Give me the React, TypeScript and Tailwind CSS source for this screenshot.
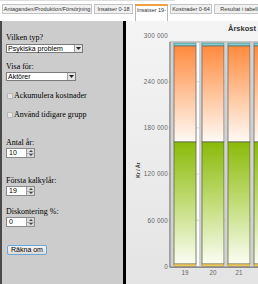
import React from 'react';

// Tab strip above the calculator
const tabs = [
  { label: 'Antaganden/Produktion/Försörjning', cls: 'w-[90px]', active: false },
  { label: 'Insatser 0-18', cls: 'w-[39px]', active: false },
  { label: 'Insatser 19-', cls: 'w-[33px]', active: true },
  { label: 'Kostnader 0-64', cls: 'w-[42px]', active: false },
  { label: 'Resultat i tabell', cls: 'w-[50px]', active: false },
];

const ticks = [
  { label: '300 000', y: 14.5 },
  { label: '240 000', y: 60.7 },
  { label: '180 000', y: 106.9 },
  { label: '120 000', y: 153.1 },
  { label: '60 000', y: 199.3 },
  { label: '0', y: 245.5 },
];

const bars = [
  { x: 48, label: '19' },
  { x: 76, label: '20' },
  { x: 102, label: '21' },
  { x: 128, label: '' },
];

function Select({ value, cls }: { value: string; cls: string }) {
  return (
    <div className={`flex h-[9px] items-stretch border border-[#7a7a7a] bg-white ${cls}`}>
      <span className="flex-1 pl-[1px] text-[7px] leading-[7px] text-black">{value}</span>
      <span className="flex w-[8px] items-center justify-center border-l border-[#a0a0a0] bg-[#e4e4e4]">
        <svg width="5" height="3" viewBox="0 0 5 3">
          <path d="M0 0h5L2.5 3z" fill="#222" />
        </svg>
      </span>
    </div>
  );
}

function NumberInput({ value }: { value: string }) {
  return (
    <div className="flex h-[10px] w-[29px] items-stretch border border-[#8a8a8a] bg-white">
      <span className="flex-1 pl-[2px] text-[7px] leading-[8px] text-black">{value}</span>
      <span className="flex w-[8px] flex-col border-l border-[#a0a0a0] bg-[#dcdcdc]">
        <span className="flex flex-1 items-center justify-center border-b border-[#a8a8a8]">
          <svg width="4" height="2" viewBox="0 0 4 2">
            <path d="M0 2h4L2 0z" fill="#444" />
          </svg>
        </span>
        <span className="flex flex-1 items-center justify-center">
          <svg width="4" height="2" viewBox="0 0 4 2">
            <path d="M0 0h4L2 2z" fill="#444" />
          </svg>
        </span>
      </span>
    </div>
  );
}

function Checkbox({ label, cls }: { label: string; cls: string }) {
  return (
    <div className={`flex h-[10px] items-center gap-[1px] pl-[1px] ${cls}`}>
      <span className="h-[6px] w-[6px] border border-[#b8b8b8] bg-[#e6e6e6]" />
      <span className="text-[8px] leading-[10px] text-black">{label}</span>
    </div>
  );
}

function Chart() {
  return (
    <svg width={132} height={263} className="block" fontFamily="'Liberation Sans', Arial, sans-serif">
      <defs>
        <linearGradient id="chartBg" x1="0" y1="0" x2="0" y2="1">
          <stop offset="0" stopColor="#f4f4f4" />
          <stop offset="1" stopColor="#e4e4e4" />
        </linearGradient>
        <linearGradient id="orange" x1="0" y1="0" x2="0" y2="1">
          <stop offset="0" stopColor="#ff8a3d" />
          <stop offset="0.55" stopColor="#ffc9a3" />
          <stop offset="1" stopColor="#fffaf6" />
        </linearGradient>
        <linearGradient id="green" x1="0" y1="0" x2="0" y2="1">
          <stop offset="0" stopColor="#8aba08" />
          <stop offset="0.5" stopColor="#c2dc78" />
          <stop offset="1" stopColor="#fbfdf4" />
        </linearGradient>
      </defs>

      <rect width={132} height={263} fill="url(#chartBg)" />

      <text x={102} y={10} fontSize={7.5} fontWeight="bold" fill="#333">
        Årskost
      </text>

      {/* plot area */}
      <rect x={44} y={21} width={90} height={225} fill="#fbfbfb" />
      {ticks.map((t) => (
        <g key={t.label}>
          {t.y > 21 && <line x1={42} x2={132} y1={t.y} y2={t.y} stroke="#dadada" strokeWidth={1} />}
          <text x={42} y={t.y + 2.3} fontSize={6.3} fill="#666" textAnchor="end" letterSpacing={0.2}>
            {t.label}
          </text>
        </g>
      ))}

      <text
        x={0}
        y={0}
        fontSize={5}
        fontWeight="bold"
        fill="#333"
        textAnchor="middle"
        transform="translate(13.5 149) rotate(-90)"
      >
        Kr / År
      </text>

      {bars.map((b) => (
        <g key={b.x}>
          <rect x={b.x - 3} y={22} width={3} height={224} fill="#d2d2d2" />
          <rect x={b.x} y={22} width={22} height={3} fill="#7fcfd0" stroke="#5a8f90" strokeWidth={0.8} />
          <rect x={b.x} y={25} width={22} height={96} fill="url(#orange)" stroke="#6a6a6a" strokeWidth={0.8} />
          <rect x={b.x} y={121} width={22} height={122} fill="url(#green)" stroke="#5f6a40" strokeWidth={0.8} />
          <rect x={b.x} y={243} width={22} height={2.5} fill="#f0c860" stroke="#8a7a40" strokeWidth={0.5} />
          {b.label && (
            <text x={b.x + 11} y={254} fontSize={6.3} fill="#666" textAnchor="middle">
              {b.label}
            </text>
          )}
        </g>
      ))}

      {/* frame */}
      <line x1={44} x2={132} y1={21} y2={21} stroke="#9a9a9a" strokeWidth={1} />
      <line x1={44} x2={44} y1={21} y2={246.5} stroke="#8a8a8a" strokeWidth={1.5} />
      <line x1={44} x2={132} y1={246.2} y2={246.2} stroke="#8a8a8a" strokeWidth={1.5} />
    </svg>
  );
}

export default function App() {
  return (
    <div className="h-[284px] w-[258px] overflow-hidden bg-white font-['Liberation_Sans',Arial,sans-serif]">
      <div className="h-px w-[175px] bg-[#dddddd]" />
      <div className="flex h-[20px] items-start gap-[2px] pl-[2px] pt-[3px]">
        {tabs.map((t) =>
          t.active ? (
            <div
              key={t.label}
              className={`flex h-[17px] shrink-0 items-start justify-center border-x border-t-2 border-x-[#b8b8b8] border-t-[#f0a040] bg-white pt-[1px] ${t.cls}`}
            >
              <span className="whitespace-nowrap text-[5.5px] leading-[7px] text-[#333]">{t.label}</span>
            </div>
          ) : (
            <div
              key={t.label}
              className={`flex h-[10px] shrink-0 items-center justify-center border border-[#c4c4c4] bg-[#f1f1f1] ${t.cls}`}
            >
              <span className="whitespace-nowrap text-[5.5px] leading-[7px] text-[#333]">{t.label}</span>
            </div>
          ),
        )}
      </div>

      <div className="flex h-[263px]">
        <div className="w-[126px] shrink-0 border-l-2 border-r-[3px] border-l-[#4a4a4a] border-r-black bg-[#cccccc] pl-[4px] font-['Liberation_Serif',serif]">
          <div className="mt-[12px] h-[10px] text-[8px] leading-[10px]">Vilken typ?</div>
          <div className="mt-[1px] font-['Liberation_Sans',Arial,sans-serif]">
            <Select value="Psykiska problem" cls="w-[77px]" />
          </div>

          <div className="mt-[9px] h-[10px] text-[8px] leading-[10px]">Visa för:</div>
          <div className="font-['Liberation_Sans',Arial,sans-serif]">
            <Select value="Aktörer" cls="w-[70px]" />
          </div>

          <Checkbox label="Ackumulera kostnader" cls="mt-[10px]" />
          <Checkbox label="Använd tidigare grupp" cls="mt-[9px]" />

          <div className="mt-[18px] h-[10px] text-[8px] leading-[10px]">Antal år:</div>
          <div className="font-['Liberation_Sans',Arial,sans-serif]">
            <NumberInput value="10" />
          </div>

          <div className="mt-[18px] h-[10px] text-[8px] leading-[10px]">Första kalkylår:</div>
          <div className="font-['Liberation_Sans',Arial,sans-serif]">
            <NumberInput value="19" />
          </div>

          <div className="mt-[11px] h-[10px] text-[8px] leading-[10px]">Diskontering %:</div>
          <div className="font-['Liberation_Sans',Arial,sans-serif]">
            <NumberInput value="0" />
          </div>

          <div className="ml-[1px] mt-[18px] font-['Liberation_Sans',Arial,sans-serif]">
            <button className="flex h-[10px] w-[40px] items-center justify-center rounded-[2px] border border-[#6aa6d6] bg-gradient-to-b from-[#f4f4f4] to-[#dcdcdc] text-[7px] leading-[8px] text-black">
              Räkna om
            </button>
          </div>
        </div>

        <div className="flex-1 overflow-hidden">
          <Chart />
        </div>
      </div>
    </div>
  );
}
